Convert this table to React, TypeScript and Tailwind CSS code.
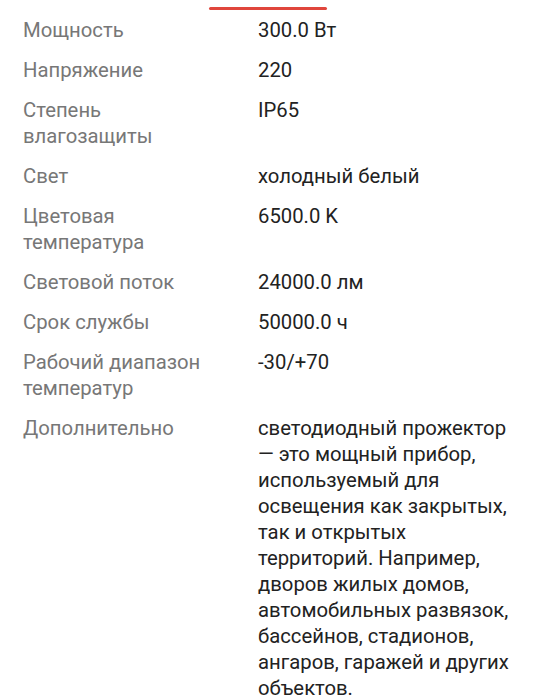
const specs: { label: string; value: string }[] = [
  { label: "Мощность", value: "300.0 Вт" },
  { label: "Напряжение", value: "220" },
  { label: "Степень влагозащиты", value: "IP65" },
  { label: "Свет", value: "холодный белый" },
  { label: "Цветовая температура", value: "6500.0 K" },
  { label: "Световой поток", value: "24000.0 лм" },
  { label: "Срок службы", value: "50000.0 ч" },
  { label: "Рабочий диапазон температур", value: "-30/+70" },
  {
    label: "Дополнительно",
    value:
      "светодиодный прожектор — это мощный прибор, используемый для освещения как закрытых, так и открытых территорий. Например, дворов жилых домов, автомобильных развязок, бассейнов, стадионов, ангаров, гаражей и других объектов.",
  },
];

export default function App() {
  return (
    <div className="min-h-screen bg-white font-['Roboto',sans-serif]">
      <div className="flex justify-center pt-[7px]">
        <div className="h-[3px] w-[118px] rounded-full bg-[#e0463c]" />
      </div>
      <dl className="flex flex-col gap-[14px] px-[23px] pt-[7px] text-[20.3px] leading-[26px]">
        {specs.map((s) => (
          <div key={s.label} className="flex gap-[30px]">
            <dt className="w-[205px] shrink-0 text-[#777777]">{s.label}</dt>
            <dd className="min-w-0 flex-1 text-[#222222]">{s.value}</dd>
          </div>
        ))}
      </dl>
    </div>
  );
}
